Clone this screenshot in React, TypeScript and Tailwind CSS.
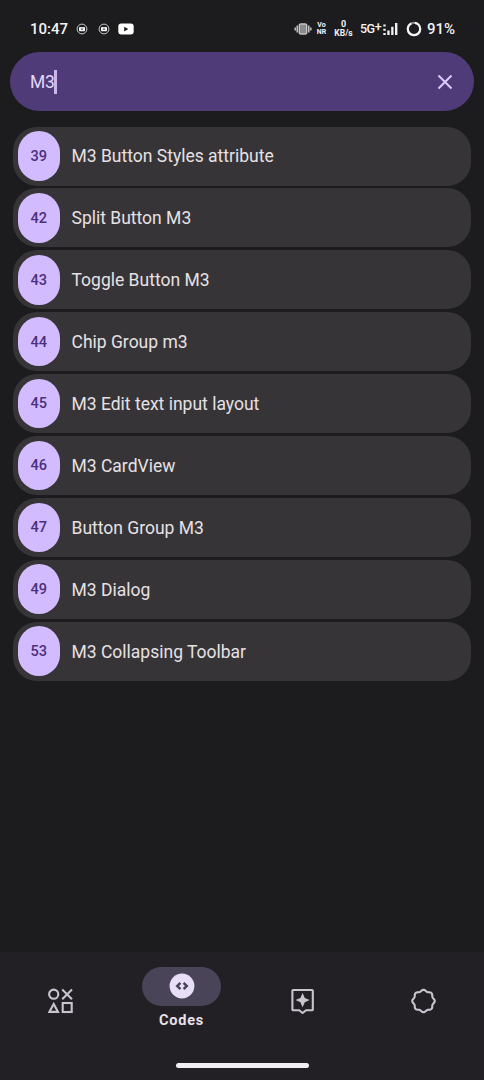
import { useState } from "react";

type codeType = {
  id: number,
  title: string
}

const codes: Array<codeType> = [
  { id: 39, title: "M3 Button Styles attribute" },
  { id: 42, title: "Split Button M3" },
  { id: 43, title: "Toggle Button M3" },
  { id: 44, title: "Chip Group m3" },
  { id: 45, title: "M3 Edit text input layout" },
  { id: 46, title: "M3 CardView" },
  { id: 47, title: "Button Group M3" },
  { id: 49, title: "M3 Dialog" },
  { id: 53, title: "M3 Collapsing Toolbar" },
];

// closed outline with eight soft lobes
const wavyPath = () => {
  const points: string[] = [];
  for (let i = 0; i < 96; i++) {
    const a = (i / 96) * Math.PI * 2;
    const r = 10.5 + 0.75 * Math.cos(8 * a);
    points.push(`${(12.5 + r * Math.cos(a)).toFixed(2)} ${(13 + r * Math.sin(a)).toFixed(2)}`);
  }
  return `M${points.join("L")}Z`;
};

const NoticeIcon = () => (
  <svg width="12" height="12" viewBox="0 0 12 12" fill="none">
    <circle cx="6" cy="6" r="4.9" stroke="#c9c9ca" strokeWidth="1" />
    <rect x="3" y="4" width="6" height="4.2" rx="0.8" fill="#f2f2f2" />
    <path d="M6 4.4v2.4M5 5.8l1 1 1-1" stroke="#3a393b" strokeWidth="0.7" />
  </svg>
);

const StatusBar = () => (
  <div className="flex h-[52px] items-center justify-between pt-[6px] pr-[29px] pl-[30px] text-[#f3f2f4]">
    <div className="flex items-center">
      <span className="w-[45.5px] text-[15px] leading-5 font-medium">10:47</span>
      <NoticeIcon />
      <span className="w-[10px]" />
      <NoticeIcon />
      <svg className="ml-[8px]" width="16" height="12" viewBox="0 0 16 12">
        <rect x="0.3" y="0.6" width="15.4" height="11" rx="3" fill="#fff" />
        <path d="M6.2 3.8v4.6l4-2.3z" fill="#1c1b1d" />
      </svg>
    </div>
    <div className="flex items-center">
      <svg width="18" height="12" viewBox="0 0 18 12" fill="none">
        <rect x="5.2" y="0.9" width="7.6" height="10.2" rx="1" fill="#8b8a8c" stroke="#eee" />
        <path d="M3.2 2.6v6.8M14.8 2.6v6.8" stroke="#ddd" strokeWidth="1.3" />
        <path d="M1.2 4.4v3.2M16.8 4.4v3.2" stroke="#ddd" strokeWidth="1.3" />
      </svg>
      <div className="ml-[4px] flex w-[11px] flex-col items-center text-[7px] leading-[7px] font-bold">
        <span>Vo</span>
        <span>NR</span>
      </div>
      <div className="ml-[7px] flex w-[19px] flex-col items-center leading-[9px] font-bold">
        <span className="text-[9px]">0</span>
        <span className="text-[8.5px]">KB/s</span>
      </div>
      <span className="ml-[7px] w-[20px] text-[12.5px] leading-4 font-medium tracking-[-0.5px] whitespace-nowrap">5G<span className="relative -top-[2px]">+</span></span>
      <svg className="ml-[3px]" width="15" height="14" viewBox="0 0 15 14" fill="#f3f2f4">
        <path d="M0.3 2.500h2.400v2h-2.400zM0.3 6.700h2.400v2h-2.400zM0.3 11h2.400v2h-2.400zM4.300 8.500h2.300V13h-2.300zM8.200 4.800h2.300V13h-2.300zM12 1h2.400v12h-2.400z" />
      </svg>
      <svg className="ml-[8px]" width="16" height="16" viewBox="0 0 16 16" fill="none">
        <circle cx="8" cy="8" r="6.2" stroke="#8b8a8c" strokeWidth="2.1" />
        <circle cx="8" cy="8" r="6.2" stroke="#f3f2f4" strokeWidth="2.2" strokeDasharray="35.4 3.6" strokeDashoffset="9.7" />
      </svg>
      <span className="ml-[5px] w-[28px] text-[15px] leading-5 font-medium">91%</span>
    </div>
  </div>
);

const ShapesIcon = () => (
  <svg width="26" height="26" viewBox="0 0 26 26" fill="none" stroke="#cac4cf" strokeWidth="2.1">
    <circle cx="5.700" cy="6.200" r="4.600" />
    <path d="M14.200 1.500l9.800 9.800M24 1.500l-9.800 9.800" />
    <path d="M5.700 16L1.400 23.900h8.600z" />
    <rect x="14.700" y="15" width="9" height="9" />
  </svg>
);

const CodeIcon = () => (
  <svg width="26" height="26" viewBox="0 0 26 26" fill="none">
    <circle cx="13" cy="13" r="12.4" fill="#e8def8" />
    <path d="M11.400 9.800L8.200 13l3.200 3.200M14.600 9.800l3.200 3.200-3.200 3.200" stroke="#4a4458" strokeWidth="2.500" />
  </svg>
);

const SparkIcon = () => (
  <svg width="26" height="26" viewBox="0 0 26 26" fill="none">
    <path d="M3.200 2h18.800q.8 0 .8.8v18.600q0 .8-.8.8h-6L12.600 25l-3.400-2.800h-6q-.8 0-.8-.8V2.800q0-.8.8-.8z" stroke="#cac4cf" strokeWidth="2.100" strokeLinejoin="round" />
    <path d="M12.600 5l2.200 4.900L19.700 12.100l-4.900 2.200L12.600 19.200l-2.200-4.900L5.500 12.100l4.900-2.200z" fill="#cac4cf" />
  </svg>
);

const WavyIcon = () => (
  <svg width="26" height="26" viewBox="0 0 26 26" fill="none">
    <path d={wavyPath()} stroke="#cac4cf" strokeWidth="2.1" strokeLinejoin="round" />
  </svg>
);

const tabs = [
  { name: "Shapes", icon: <ShapesIcon /> },
  { name: "Codes", icon: <CodeIcon /> },
  { name: "Spark", icon: <SparkIcon /> },
  { name: "More", icon: <WavyIcon /> },
];

export default function App() {
  const [search, setSearch] = useState<string>("M3");
  const [active, setActive] = useState<string>("Codes");

  const rows = codes
    .filter((code) => code.title.toLowerCase().includes(search.toLowerCase()))
    .map((code) => (
      <li key={code.id} className="flex h-[59px] items-center rounded-[24px] bg-[#373437] pl-[5px]">
        <span className="flex h-[49.5px] w-[42.5px] items-center justify-center rounded-full bg-[#d3bbff] pt-[1.5px] text-[14.5px] font-medium text-[#4a2f7c]">
          {code.id}
        </span>
        <span className="ml-[11.5px] pt-px text-[17.5px] text-[#e6e1e4]">{code.title}</span>
      </li>
    ));

  return (
    <div className="flex h-[1080px] w-[484px] flex-col overflow-hidden bg-[#1c1b1d] font-['Roboto',sans-serif]">
      <StatusBar />

      {/* Search */}
      <div className="mx-[10px] flex h-[59px] shrink-0 items-center justify-between rounded-full bg-[#4f3b78] pr-[21.5px] pl-[20px]">
        <div className="flex items-center text-[17.5px] tracking-[-0.4px] text-[#e5d6fb]">
          <span className="pt-px">{search}</span>
          <span className="h-6 w-[2.5px] bg-[#cdb6ee]" />
        </div>
        <button onClick={() => setSearch("")}>
          <svg width="16" height="16" viewBox="0 0 16 16" fill="none">
            <path d="M1.500 1.500l13 13M14.500 1.500l-13 13" stroke="#dcc8fb" strokeWidth="2.100" />
          </svg>
        </button>
      </div>

      {/* List */}
      <ul className="mt-[15.5px] ml-[12.5px] flex w-[458.5px] grow flex-col gap-[2.9px]">{rows}</ul>

      {/* Bottom navigation */}
      <nav className="flex h-[128px] shrink-0 flex-col bg-[#221f25]">
        <div className="grid h-[98px] grid-cols-4">
          {tabs.map((tab) => (
            <button key={tab.name} onClick={() => setActive(tab.name)} className="flex flex-col items-center justify-center">
              <span className={active === tab.name ? "flex h-[39px] w-[79px] shrink-0 items-center justify-center rounded-full bg-[#4a4458]" : ""}>
                {tab.icon}
              </span>
              {active === tab.name && (
                <span className="mt-[5.5px] mb-[4px] text-[14.5px] leading-5 font-bold tracking-[0.8px] text-[#e8e0ea]">{tab.name}</span>
              )}
            </button>
          ))}
        </div>
        <div className="mx-auto mt-[12.5px] h-[5px] w-[133px] rounded-full bg-[#f1eef3]" />
      </nav>
    </div>
  );
}
